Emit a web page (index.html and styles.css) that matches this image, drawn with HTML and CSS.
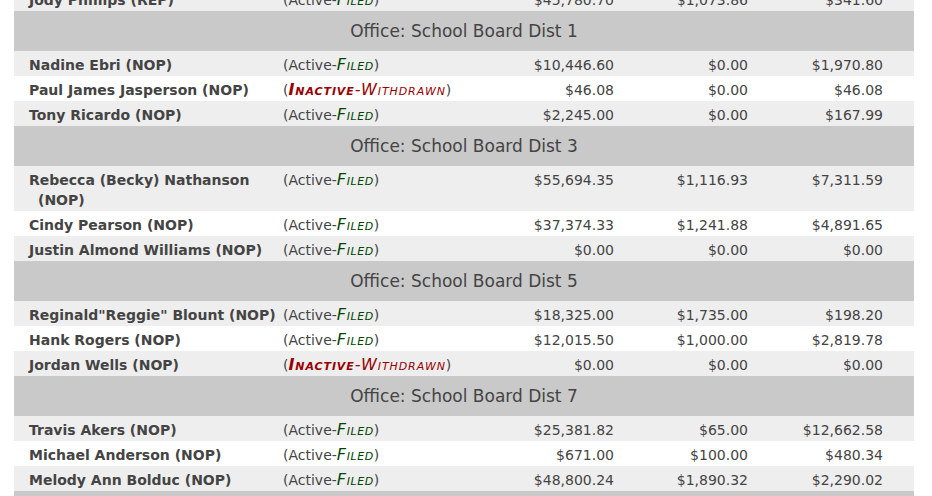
FILE: index.html
```html
<!DOCTYPE html>
<html>
<head>
<meta charset="utf-8">
<link rel="stylesheet" href="styles.css">
</head>
<body>
<div class="page">
<table class="report">
  <colgroup>
    <col class="c-name"><col class="c-status"><col class="c-amt1"><col class="c-amt2"><col class="c-amt3">
  </colgroup>
  <tbody>
    <tr class="alt"><td class="name">Jody Phillips (REP)</td><td class="status">(Active-<span class="filed">Filed</span>)</td><td class="amt">$45,780.70</td><td class="amt">$1,073.86</td><td class="amt">$341.60</td></tr>
    <tr class="office"><td colspan="5">Office: School Board Dist 1</td></tr>
    <tr class="alt"><td class="name">Nadine Ebri (NOP)</td><td class="status">(Active-<span class="filed">Filed</span>)</td><td class="amt">$10,446.60</td><td class="amt">$0.00</td><td class="amt">$1,970.80</td></tr>
    <tr><td class="name">Paul James Jasperson (NOP)</td><td class="status">(<span class="inactive">Inactive</span><span class="wd">-Withdrawn</span>)</td><td class="amt">$46.08</td><td class="amt">$0.00</td><td class="amt">$46.08</td></tr>
    <tr class="alt"><td class="name">Tony Ricardo (NOP)</td><td class="status">(Active-<span class="filed">Filed</span>)</td><td class="amt">$2,245.00</td><td class="amt">$0.00</td><td class="amt">$167.99</td></tr>
    <tr class="office"><td colspan="5">Office: School Board Dist 3</td></tr>
    <tr class="alt"><td class="name">Rebecca (Becky) Nathanson (NOP)</td><td class="status">(Active-<span class="filed">Filed</span>)</td><td class="amt">$55,694.35</td><td class="amt">$1,116.93</td><td class="amt">$7,311.59</td></tr>
    <tr><td class="name">Cindy Pearson (NOP)</td><td class="status">(Active-<span class="filed">Filed</span>)</td><td class="amt">$37,374.33</td><td class="amt">$1,241.88</td><td class="amt">$4,891.65</td></tr>
    <tr class="alt"><td class="name">Justin Almond Williams (NOP)</td><td class="status">(Active-<span class="filed">Filed</span>)</td><td class="amt">$0.00</td><td class="amt">$0.00</td><td class="amt">$0.00</td></tr>
    <tr class="office"><td colspan="5">Office: School Board Dist 5</td></tr>
    <tr class="alt"><td class="name">Reginald"Reggie" Blount (NOP)</td><td class="status">(Active-<span class="filed">Filed</span>)</td><td class="amt">$18,325.00</td><td class="amt">$1,735.00</td><td class="amt">$198.20</td></tr>
    <tr><td class="name">Hank Rogers (NOP)</td><td class="status">(Active-<span class="filed">Filed</span>)</td><td class="amt">$12,015.50</td><td class="amt">$1,000.00</td><td class="amt">$2,819.78</td></tr>
    <tr class="alt"><td class="name">Jordan Wells (NOP)</td><td class="status">(<span class="inactive">Inactive</span><span class="wd">-Withdrawn</span>)</td><td class="amt">$0.00</td><td class="amt">$0.00</td><td class="amt">$0.00</td></tr>
    <tr class="office"><td colspan="5">Office: School Board Dist 7</td></tr>
    <tr class="alt"><td class="name">Travis Akers (NOP)</td><td class="status">(Active-<span class="filed">Filed</span>)</td><td class="amt">$25,381.82</td><td class="amt">$65.00</td><td class="amt">$12,662.58</td></tr>
    <tr><td class="name">Michael Anderson (NOP)</td><td class="status">(Active-<span class="filed">Filed</span>)</td><td class="amt">$671.00</td><td class="amt">$100.00</td><td class="amt">$480.34</td></tr>
    <tr class="alt"><td class="name">Melody Ann Bolduc (NOP)</td><td class="status">(Active-<span class="filed">Filed</span>)</td><td class="amt">$48,800.24</td><td class="amt">$1,890.32</td><td class="amt">$2,290.02</td></tr>
    <tr class="office"><td colspan="5">Office: School Board Dist 9</td></tr>
  </tbody>
</table>
</div>
</body>
</html>
```

FILE: styles.css
```css
html, body {
  margin: 0;
  padding: 0;
  background: #fff;
}
.page {
  padding-left: 14px;
  margin-top: -14px;
  font-family: "DejaVu Sans", Verdana, sans-serif;
  font-size: 14px;
  color: #444;
}
.report {
  width: 900px;
  table-layout: fixed;
  border-collapse: collapse;
}
.c-name { width: 265px; }
.c-status { width: 200px; }
.c-amt1 { width: 166px; }
.c-amt2 { width: 134px; }
.c-amt3 { width: 135px; }
.report td {
  padding: 4px 0 1px 0;
  line-height: 20px;
  vertical-align: top;
}
.report tr.alt td { background: #eee; }
.report td.name {
  font-weight: bold;
  padding-left: 24px;
  text-indent: -9px;
}
.report td.status { padding-left: 4px; }
.report td.amt {
  text-align: right;
  padding-right: 31px;
}
.report tr.office td {
  background: #c9c9c9;
  text-align: center;
  font-size: 17px;
  line-height: 20px;
  padding: 10px 0;
  color: #444;
}
.filed {
  font-style: italic;
  font-variant: small-caps;
  font-size: 16px;
  letter-spacing: 0.6px;
  color: #004400;
}
.inactive {
  font-style: italic;
  font-variant: small-caps;
  font-weight: bold;
  font-size: 16px;
  letter-spacing: 0.9px;
  color: #900;
}
.wd {
  font-style: italic;
  font-variant: small-caps;
  font-size: 16px;
  letter-spacing: 0.9px;
  color: #900;
}
```
